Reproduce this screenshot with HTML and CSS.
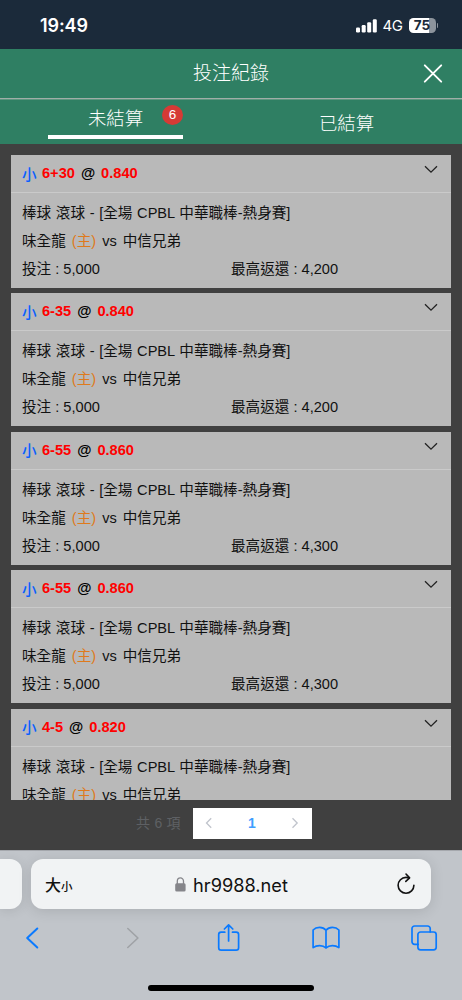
FILE: index.html
```
<!DOCTYPE html>
<html lang="zh-Hant">
<head>
    <meta charset="UTF-8">
    <meta name="viewport" content="width=device-width, initial-scale=1.0">
    <title>投注紀錄</title>
    <link rel="stylesheet" href="styles.css">
</head>
<body>

    <div class="status-bar">
        <span class="time">19:49</span>
        <div class="status-icons">
            <svg class="signal" width="21" height="14" viewBox="0 0 21 14" fill="#fff">
                <rect x="0" y="8.4" width="4" height="5" rx="1.2"/>
                <rect x="5.7" y="6" width="4" height="7.4" rx="1.2"/>
                <rect x="11.2" y="3.2" width="4" height="10.2" rx="1.2"/>
                <rect x="16.8" y="0.3" width="4" height="13.1" rx="1.2"/>
            </svg>
            <span class="network">4G</span>
            <span class="battery">75</span>
            <span class="battery-tip"></span>
        </div>
    </div>

    <header class="header">
        <h1>投注紀錄</h1>
        <svg class="close" width="20" height="20" viewBox="0 0 20 20" fill="none" stroke="#fff" stroke-width="1.9" stroke-linecap="round">
            <path d="M1.8 1.3L18.2 17.7M18.2 1.3L1.8 17.7"/>
        </svg>
    </header>

    <nav class="tabs">
        <div class="tab active"><span>未結算</span><span class="badge">6</span></div>
        <div class="tab"><span>已結算</span></div>
    </nav>

    <main class="list">
        <div class="card">
            <div class="card-head">
                <span class="pick">小</span><span class="red">6+30</span><span class="at">@</span><span class="red">0.840</span>
                <svg class="arrow" width="14" height="9" viewBox="0 0 14 9"><path d="M1 1.2L7 7.2L13 1.2"/></svg>
            </div>
            <div class="card-body">
                <p class="league">棒球 滾球 - [全場 CPBL 中華職棒-熱身賽]</p>
                <p class="teams"><span>味全龍</span><span class="home">(主)</span><span>vs</span><span>中信兄弟</span></p>
                <p class="money"><span>投注 : 5,000</span><span>最高返還 : 4,200</span></p>
            </div>
        </div>

        <div class="card">
            <div class="card-head">
                <span class="pick">小</span><span class="red">6-35</span><span class="at">@</span><span class="red">0.840</span>
                <svg class="arrow" width="14" height="9" viewBox="0 0 14 9"><path d="M1 1.2L7 7.2L13 1.2"/></svg>
            </div>
            <div class="card-body">
                <p class="league">棒球 滾球 - [全場 CPBL 中華職棒-熱身賽]</p>
                <p class="teams"><span>味全龍</span><span class="home">(主)</span><span>vs</span><span>中信兄弟</span></p>
                <p class="money"><span>投注 : 5,000</span><span>最高返還 : 4,200</span></p>
            </div>
        </div>

        <div class="card">
            <div class="card-head">
                <span class="pick">小</span><span class="red">6-55</span><span class="at">@</span><span class="red">0.860</span>
                <svg class="arrow" width="14" height="9" viewBox="0 0 14 9"><path d="M1 1.2L7 7.2L13 1.2"/></svg>
            </div>
            <div class="card-body">
                <p class="league">棒球 滾球 - [全場 CPBL 中華職棒-熱身賽]</p>
                <p class="teams"><span>味全龍</span><span class="home">(主)</span><span>vs</span><span>中信兄弟</span></p>
                <p class="money"><span>投注 : 5,000</span><span>最高返還 : 4,300</span></p>
            </div>
        </div>

        <div class="card">
            <div class="card-head">
                <span class="pick">小</span><span class="red">6-55</span><span class="at">@</span><span class="red">0.860</span>
                <svg class="arrow" width="14" height="9" viewBox="0 0 14 9"><path d="M1 1.2L7 7.2L13 1.2"/></svg>
            </div>
            <div class="card-body">
                <p class="league">棒球 滾球 - [全場 CPBL 中華職棒-熱身賽]</p>
                <p class="teams"><span>味全龍</span><span class="home">(主)</span><span>vs</span><span>中信兄弟</span></p>
                <p class="money"><span>投注 : 5,000</span><span>最高返還 : 4,300</span></p>
            </div>
        </div>

        <div class="card">
            <div class="card-head">
                <span class="pick">小</span><span class="red">4-5</span><span class="at">@</span><span class="red">0.820</span>
                <svg class="arrow" width="14" height="9" viewBox="0 0 14 9"><path d="M1 1.2L7 7.2L13 1.2"/></svg>
            </div>
            <div class="card-body">
                <p class="league">棒球 滾球 - [全場 CPBL 中華職棒-熱身賽]</p>
                <p class="teams"><span>味全龍</span><span class="home">(主)</span><span>vs</span><span>中信兄弟</span></p>
            </div>
        </div>
    </main>

    <div class="pagination">
        <span class="total">共 6 項</span>
        <div class="pager">
            <svg width="8" height="12" viewBox="0 0 8 12"><path d="M6.2 1.2L1.5 6L6.2 10.8"/></svg>
            <span class="page">1</span>
            <svg width="8" height="12" viewBox="0 0 8 12"><path d="M1.5 1.2L6.2 6L1.5 10.8"/></svg>
        </div>
    </div>

    <footer class="browser">
        <div class="address-row">
            <div class="prev-tab"></div>
            <div class="address">
                <span class="text-size">大<small>小</small></span>
                <div class="url">
                    <svg width="11" height="15" viewBox="0 0 11 15">
                        <rect x="0.2" y="6.2" width="10.4" height="8.4" rx="1.5" fill="#85858a"/>
                        <path d="M2.3 7V4.2a3.1 3.3 0 0 1 6.2 0V7" fill="none" stroke="#85858a" stroke-width="1.3"/>
                    </svg>
                    <span>hr9988.net</span>
                </div>
                <!-- open ring with the arrow head at the top -->
                <svg class="reload" width="18" height="21" viewBox="0 0 18 21" fill="none" stroke="#111" stroke-width="1.6" stroke-linecap="round" stroke-linejoin="round">
                    <path d="M12 4.9C10.6 4.4 9.8 4.4 9 4.4A7.9 7.9 0 1 0 16.9 12.3"/>
                    <path d="M9 1L12.6 4.9L8.8 8.4"/>
                </svg>
            </div>
        </div>

        <div class="toolbar">
            <svg width="28" height="28" viewBox="0 0 28 28"><path stroke-width="2" d="M19.3 4.5L9.2 14L19.3 23.5"/></svg>
            <svg class="off" width="28" height="28" viewBox="0 0 28 28"><path stroke-width="1.6" d="M11.8 4.5L21.9 14L11.8 23.5"/></svg>
            <svg width="28" height="28" viewBox="0 0 28 28">
                <path d="M10.8 8.2H7.1a2.4 2.4 0 0 0-2.4 2.4v13.2a2.4 2.4 0 0 0 2.4 2.4h15.1a2.4 2.4 0 0 0 2.4-2.4V10.6a2.4 2.4 0 0 0-2.4-2.4H18.5"/>
                <path d="M14.6 17V0.8M10.4 5L14.6 0.8L18.8 5"/>
            </svg>
            <svg width="28" height="28" viewBox="0 0 28 28">
                <path d="M14 6.2C12.3 4.2 10.1 3.4 7.6 3.4C5 3.4 2.7 4.3 1.1 6V23.6C3 22.2 5 21.6 7.6 21.6C10.1 21.6 12.3 22.3 14 24C15.7 22.3 17.9 21.6 20.4 21.6C23 21.6 25 22.2 26.9 23.6V6C25.3 4.3 23 3.4 20.4 3.4C17.9 3.4 15.7 4.2 14 6.2ZM14 6.2V24"/>
            </svg>
            <svg width="28" height="28" viewBox="0 0 28 28">
                <path d="M8.2 20.3H4.6a2.6 2.6 0 0 1-2.6-2.6V4.6A2.6 2.6 0 0 1 4.6 2H17.6a2.6 2.6 0 0 1 2.6 2.6V8"/>
                <rect x="7.9" y="8" width="18.3" height="17.9" rx="2.6"/>
            </svg>
        </div>

        <div class="home-indicator"></div>
    </footer>

</body>
</html>
```

FILE: styles.css
```
* {
    box-sizing: border-box;
}

body {
    margin: 0;
    height: 1000px;
    display: flex;
    flex-direction: column;
    overflow: hidden;
    background-color: #404040;
    font-family: "Liberation Sans", "Noto Sans CJK TC", sans-serif;
}

svg {
    display: block;
    flex: none;
    overflow: visible;
}

.status-bar {
    height: 49px;
    flex: none;
    display: flex;
    justify-content: space-between;
    align-items: center;
    padding: 2px 24px 0 40px;
    background-color: #1b2a3a;
    color: #fff;
    font-family: Inter, sans-serif;
}

.time {
    font-size: 18px;
    font-weight: 600;
    letter-spacing: -0.1px;
}

.status-icons {
    display: flex;
    align-items: center;
}

.network {
    margin: 0 0 0 6px;
    width: 26px;
    font-size: 15px;
    letter-spacing: -0.5px;
}

.battery {
    width: 27px;
    height: 15px;
    border-radius: 4.5px;
    background: linear-gradient(90deg, #fff 75%, #8d949c 75%);
    color: #1b2a3a;
    font-size: 13.5px;
    font-weight: 700;
    line-height: 15px;
    text-align: center;
}

.battery-tip {
    width: 1.5px;
    height: 5px;
    margin-left: 1px;
    border-radius: 0 2px 2px 0;
    background-color: #8d949c;
}

.header {
    height: 51px;
    flex: none;
    display: flex;
    align-items: center;
    justify-content: flex-end;
    padding: 0 19px 1px 0;
    background: linear-gradient(#2f7f63 49px, #a0aea8 49px, #a0aea8 50px, #5c977f 50px);
    color: #fff;
}

.header h1 {
    flex: 1;
    margin: 0 0 0 39px;
    text-align: center;
    font-size: 19px;
    font-weight: 300;
    line-height: 30px;
}

.tabs {
    height: 44px;
    flex: none;
    display: flex;
    background-color: #2f7f63;
    color: #fff;
    font-size: 18.4px;
    font-weight: 300;
}

.tab {
    display: flex;
    justify-content: center;
    align-items: center;
    position: relative;
    width: 231px;
    padding-bottom: 1px;
}

.tab.active {
    width: 135px;
    height: 39px;
    margin: 0 48px;
    border-bottom: 4px solid #fff;
}

.badge {
    position: absolute;
    top: 5px;
    right: 0;
    width: 21px;
    height: 20px;
    border-radius: 50%;
    background-color: #d63a35;
    font-size: 13.5px;
    line-height: 20px;
    text-align: center;
}

.list {
    height: 645px;
    flex: none;
    margin: 11px 11px 0;
    overflow: hidden;
}

.card {
    height: 133px;
    margin-bottom: 5.4px;
    background-color: #b9b9b9;
    color: #111;
    font-size: 14.6px;
}

.card-head {
    height: 38px;
    display: flex;
    align-items: center;
    padding: 0 13px 1px 11px;
    border-bottom: 1px solid #cacaca;
    font-weight: bold;
}

.pick {
    width: 20px;
    color: #0a60ff;
    font-weight: 500;
}

.red {
    color: #f00;
}

.at {
    margin: 0 6px;
    color: #000;
}

.arrow {
    margin: -7px 0 0 auto;
    fill: none;
    stroke: #222;
    stroke-width: 1.3;
}

.card-body {
    padding: 6px 11px 0;
}

.card-body p {
    margin: 0;
    height: 28px;
    line-height: 28px;
    white-space: nowrap;
}

.league {
    word-spacing: 0.6px;
}

.teams {
    display: flex;
    gap: 6px;
}

.home {
    color: #df7a1c;
}

.money {
    display: grid;
    grid-template-columns: 1fr 1fr;
}

.pagination {
    height: 50px;
    flex: none;
    display: flex;
    padding: 8px 0 0 136px;
}

.total {
    width: 57px;
    color: #5e6064;
    font-size: 14px;
    line-height: 31px;
    word-spacing: 0.5px;
}

.pager {
    width: 119px;
    height: 31px;
    display: flex;
    justify-content: space-between;
    align-items: center;
    padding: 0 13px 1px 12px;
    background-color: #fff;
}

.pager svg {
    fill: none;
    stroke: #c0c4cc;
    stroke-width: 1.3;
}

.page {
    color: #409eff;
    font-size: 14px;
    font-weight: bold;
}

.browser {
    height: 150px;
    flex: none;
    padding-top: 8px;
    border-top: 1px solid #a5a8ad;
    background-color: #c1c5ca;
}

.address-row {
    display: flex;
    gap: 9px;
}

.prev-tab {
    width: 22px;
    height: 50px;
    border-radius: 0 12px 12px 0;
    background-color: #f1f3f4;
    box-shadow: 0 2px 12px rgba(0, 0, 0, 0.1);
}

.address {
    width: 400px;
    height: 50px;
    display: flex;
    justify-content: space-between;
    align-items: center;
    padding: 0 16px 0 14px;
    border-radius: 12px;
    background-color: #f1f3f4;
    box-shadow: 0 2px 14px rgba(0, 0, 0, 0.12);
    color: #111;
}

.text-size {
    width: 32px;
    font-size: 16px;
    font-weight: 500;
}

.text-size small {
    font-size: 11.5px;
}

.url {
    display: flex;
    align-items: center;
    gap: 7px;
    margin: 1px 11px 0 0;
    font-family: Inter, sans-serif;
    font-size: 18.2px;
}

.reload {
    margin-bottom: 2px;
}

.toolbar {
    display: flex;
    justify-content: space-between;
    padding: 14.5px 24px 0 18px;
}

.toolbar svg {
    fill: none;
    stroke: #0a7aff;
    stroke-width: 1.7;
    stroke-linecap: round;
    stroke-linejoin: round;
}

.toolbar .off {
    stroke: #9fa2a6;
}

.home-indicator {
    width: 166px;
    height: 6px;
    margin: 33.5px auto 0;
    border-radius: 3px;
    background-color: #000;
}
```
